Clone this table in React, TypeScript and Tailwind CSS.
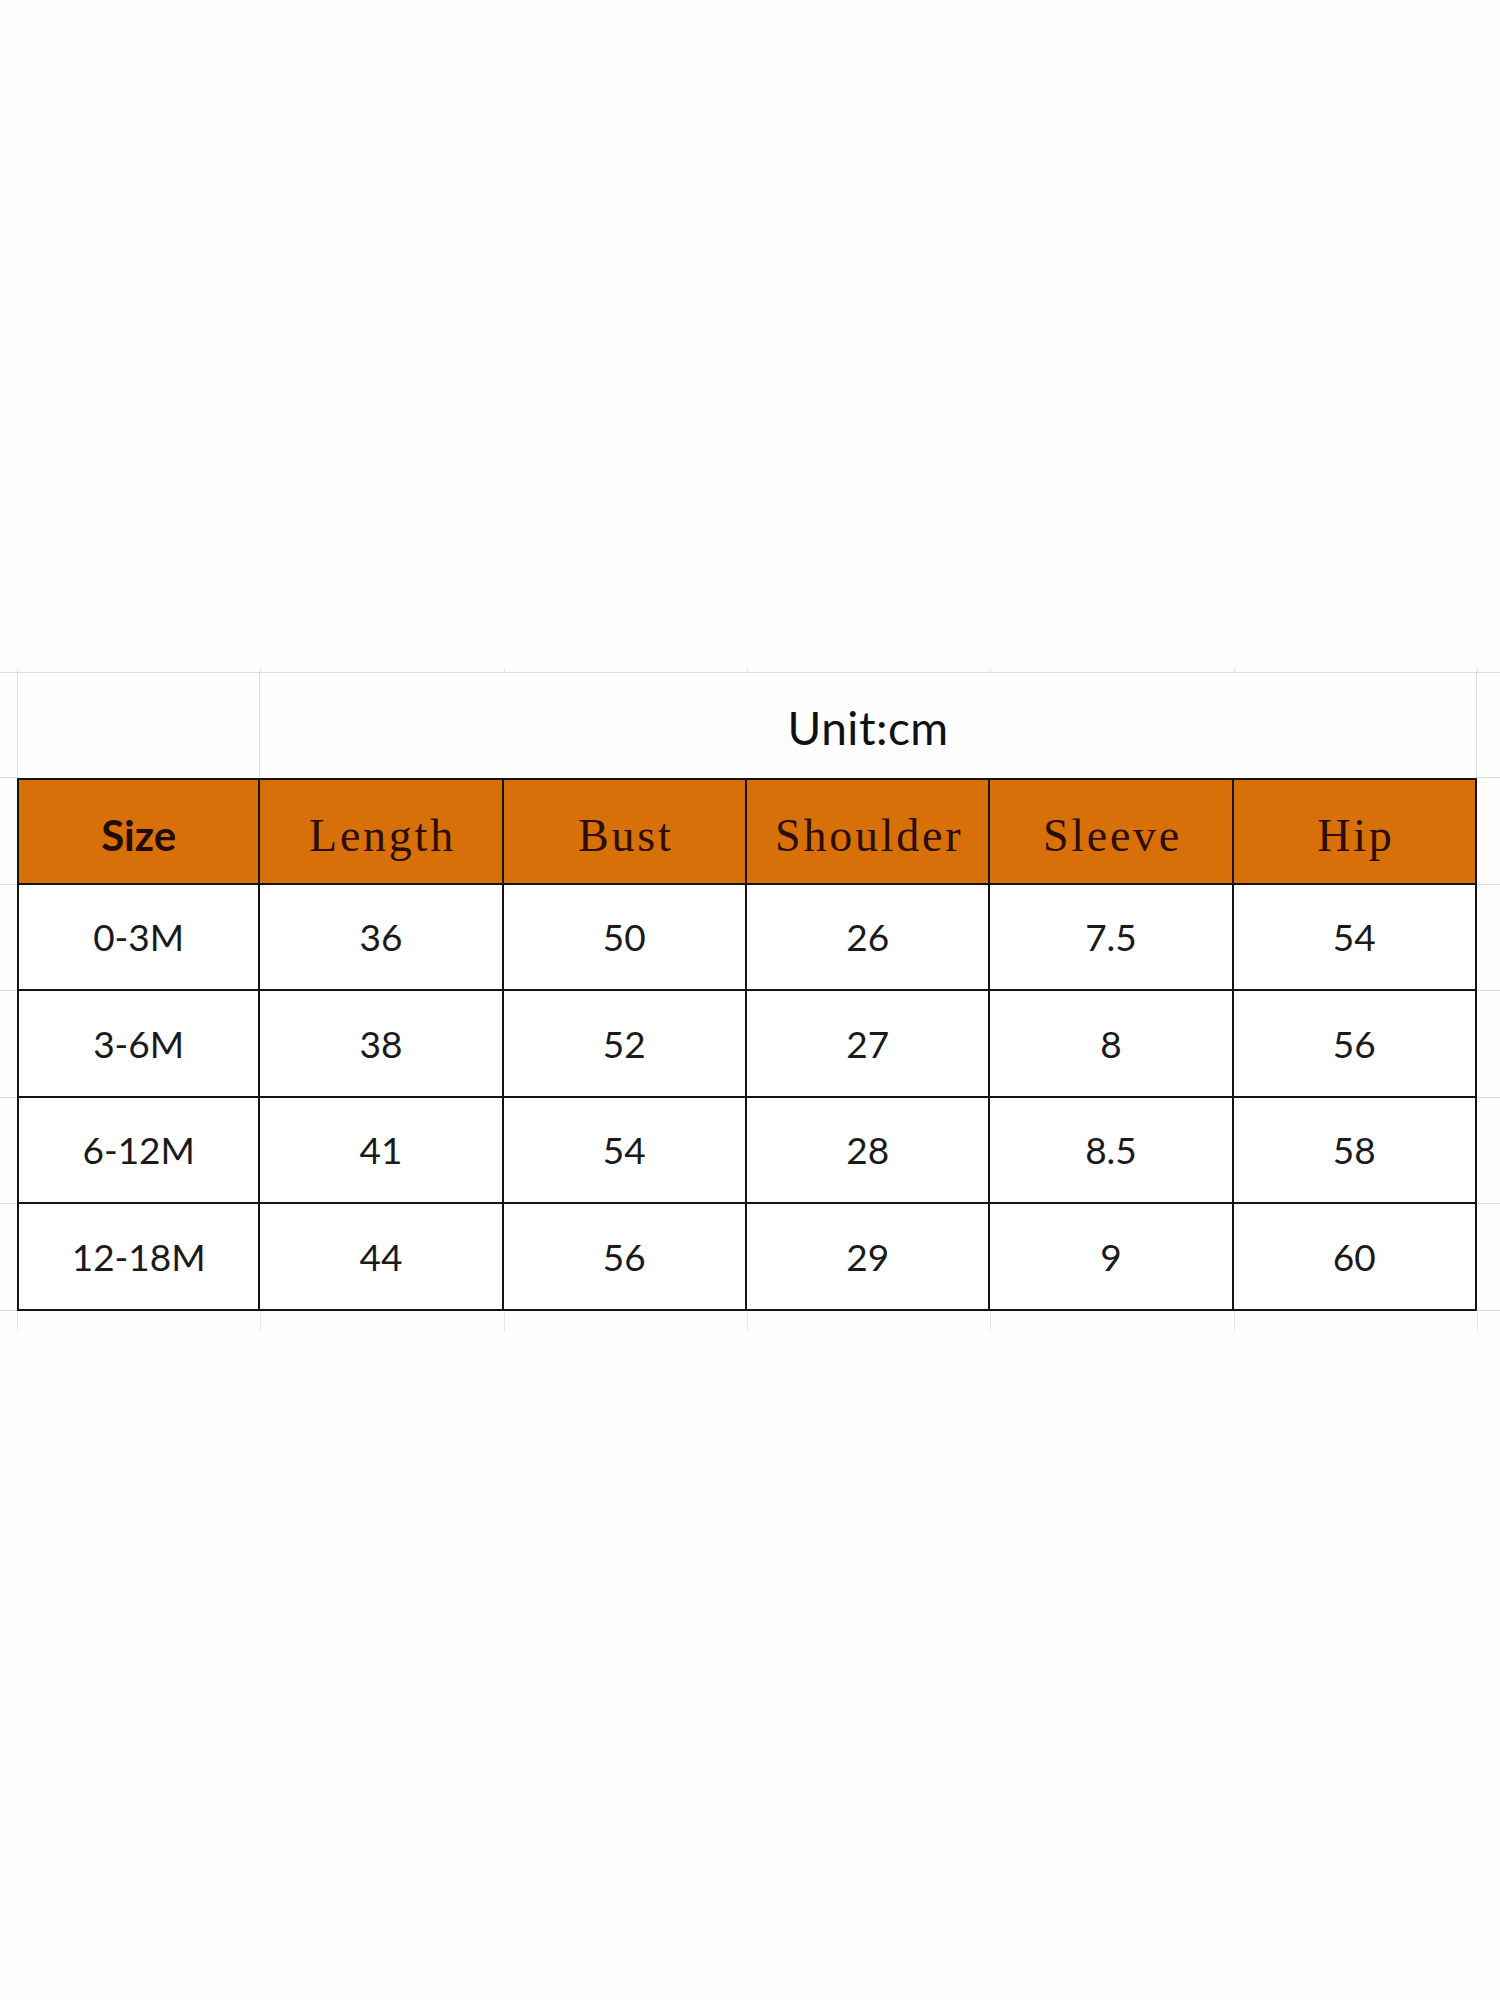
import clsx from "clsx";

const cols = "grid grid-cols-[17px_repeat(6,243.33px)_1fr]";

const heads = ["Length", "Bust", "Shoulder", "Sleeve", "Hip"];

const rows = [
  ["0-3M", "36", "50", "26", "7.5", "54"],
  ["3-6M", "38", "52", "27", "8", "56"],
  ["6-12M", "41", "54", "28", "8.5", "58"],
  ["12-18M", "44", "56", "29", "9", "60"],
];

// faint spreadsheet gridline stubs above / below the table
function Stubs({ h }: { h: string }) {
  return (
    <div className={clsx(cols, h)}>
      <div />
      {[0, 1, 2, 3, 4, 5, 6].map((i) => (
        <div key={i} className="border-l border-[#e6e6e6]" />
      ))}
    </div>
  );
}

export default function App() {
  return (
    <div className="min-h-[2000px] w-[1500px] bg-[#fefefe]" style={{ fontFamily: "Lato, 'Open Sans', sans-serif" }}>
      <div className="h-[668px]" />

      <Stubs h="h-[4px]" />

      {/* unit row */}
      <div className={clsx(cols, "h-[106px]")}>
        <div className="border-y border-[#dedede]" />
        <div className="border-l border-r border-t border-[#dedede]" />
        <div className="col-span-5 flex items-center justify-center border-r border-t border-[#dedede] pt-1 text-[46px] tracking-[0.5px] text-[#111]">
          Unit:cm
        </div>
        <div className="border-y border-[#dedede]" />
      </div>

      {/* header */}
      <div className={clsx(cols, "h-[106.6px]")}>
        <div className="border-b border-[#dedede]" />
        <div className="flex items-center justify-center border-2 border-t-2 border-[#141414] bg-[#d8700a] pt-2 text-[42px] font-bold text-[#230b00]">
          Size
        </div>
        {heads.map((h) => (
          <div
            key={h}
            className="flex items-center justify-center border-b-2 border-r-2 border-t-2 border-[#141414] bg-[#d8700a] pt-2 pl-[3px] text-[46px] tracking-[0.06em] text-[#2e0e00]"
            style={{ fontFamily: "'Liberation Serif', serif" }}
          >
            {h}
          </div>
        ))}
        <div className="border-b border-[#dedede]" />
      </div>

      {rows.map((r) => (
        <div key={r[0]} className={clsx(cols, "h-[106.6px]")}>
          <div className="border-b border-[#dedede]" />
          {r.map((c, i) => (
            <div
              key={i}
              className={clsx(
                "flex items-center justify-center border-b-2 border-r-2 border-[#141414] bg-white text-[37px] text-[#1a1a1a]",
                i === 0 && "border-l-2"
              )}
            >
              {c}
            </div>
          ))}
          <div className="border-b border-[#dedede]" />
        </div>
      ))}

      <Stubs h="h-[20px]" />
    </div>
  );
}
